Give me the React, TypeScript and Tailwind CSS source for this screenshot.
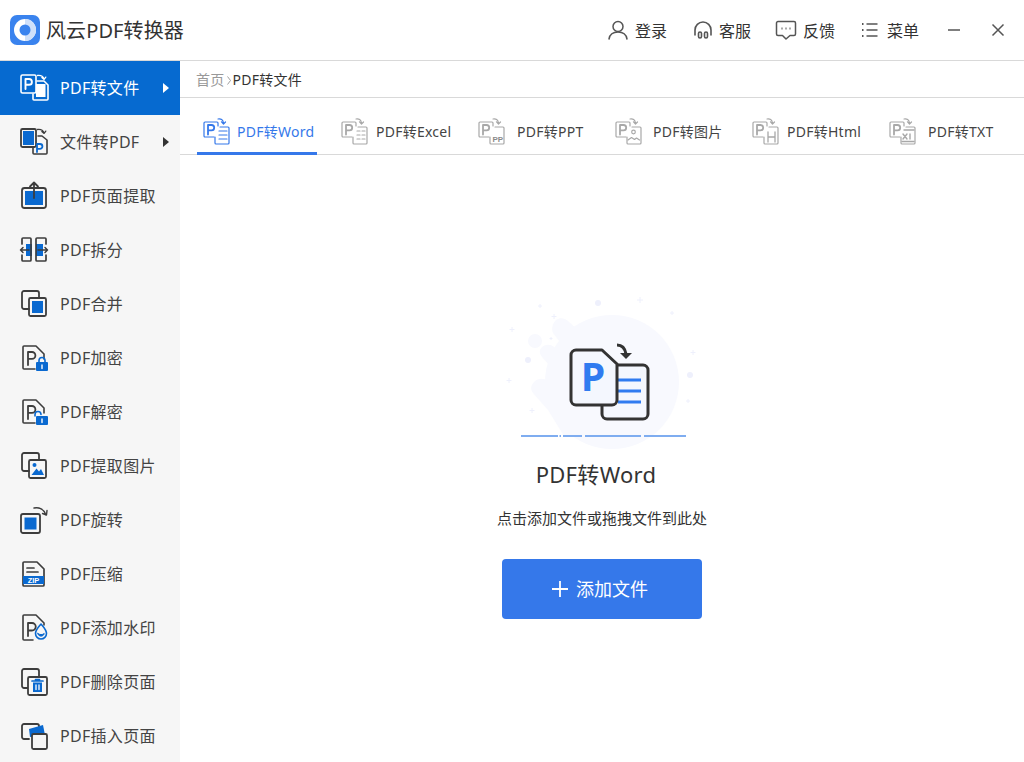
import type { ReactNode } from "react";

const DARK = "#3d3d3d";
const BLUE = "#0a69d0";

function Icon({ children, color = DARK }: { children: ReactNode; color?: string }) {
  return (
    <svg width="30" height="30" viewBox="0 0 30 30" fill="none" stroke={color} strokeWidth="1.6" strokeLinejoin="round" strokeLinecap="round">
      {children}
    </svg>
  );
}

function RotateArrow({ color }: { color: string }) {
  return <path d="M18.500 2.500c3-.4 5.500.6 6.500 3.400M22.800 4.600l2.300 1.800 1.700-2.300" stroke={color} strokeWidth="1.300" />;
}

const sidebarIcons: ReactNode[] = [
  <Icon color="#ffffff" key="0">
    <rect x="2" y="2" width="15" height="18" rx="1.5" />
    <path d="M6.500 16V6h3.500a2.800 2.800 0 0 1 0 5.800H6.500" strokeWidth="1.900" />
    <path d="M18 8h7l4 4v14a1 1 0 0 1-1 1H15a1 1 0 0 1-1-1v-5" />
    <rect x="17" y="11" width="9.500" height="13" fill="#ffffff" stroke="none" />
    <RotateArrow color="#ffffff" />
  </Icon>,
  <Icon key="1">
    <rect x="2" y="2" width="15" height="18" rx="1.5" strokeWidth="1.8" />
    <rect x="4" y="4" width="11" height="14" fill={BLUE} stroke="none" />
    <path d="M19 9h4l5 4v13a1 1 0 0 1-1 1H15a1 1 0 0 1-1-1v-6" strokeWidth="1.6" />
    <path d="M18 25v-8h3a2.300 2.300 0 0 1 0 4.800h-3" stroke={BLUE} strokeWidth="1.800" />
    <RotateArrow color={DARK} />
  </Icon>,
  <Icon key="2">
    <rect x="3" y="7" width="24" height="20" rx="2.500" strokeWidth="1.800" />
    <rect x="6" y="10" width="18" height="14" fill={BLUE} stroke="none" />
    <path d="M15 17V2M11 5.500 15 1.500l4 4" strokeWidth="1.800" />
  </Icon>,
  <Icon key="3">
    <rect x="7" y="9" width="6" height="12" fill={BLUE} stroke="none" />
    <rect x="17" y="9" width="7" height="12" fill={BLUE} stroke="none" />
    <path d="M3 9V4a1 1 0 0 1 1-1h7a1 1 0 0 1 1 1v21a1 1 0 0 1-1 1H4a1 1 0 0 1-1-1v-5M27 9V4a1 1 0 0 0-1-1h-8a1 1 0 0 0-1 1v21a1 1 0 0 0 1 1h8a1 1 0 0 0 1-1v-5" strokeWidth="1.700" />
    <path d="M1.500 15H10M4 12.500 1.500 15 4 17.500M19 15h9.500M26 12.500l2.500 2.500-2.500 2.500" strokeWidth="1.500" />
  </Icon>,
  <Icon key="4">
    <path d="M10 20H5a2 2 0 0 1-2-2V4a2 2 0 0 1 2-2h13a2 2 0 0 1 2 2v5" strokeWidth="1.800" />
    <rect x="10" y="9" width="17" height="18" rx="1.500" strokeWidth="1.800" />
    <rect x="13" y="12" width="11" height="12" fill={BLUE} stroke="none" />
  </Icon>,
  <Icon key="5">
    <path d="M16 26H5a1 1 0 0 1-1-1V4a1 1 0 0 1 1-1h12l8 8v5" />
    <path d="M9 22V9h4a3.300 3.300 0 0 1 0 6.800H9" strokeWidth="1.800" />
    <rect x="17" y="19" width="12" height="9" rx="1" fill={BLUE} stroke="none" />
    <path d="M20 19v-1.500a3 3 0 0 1 6 0V19" stroke={BLUE} />
    <path d="M23 22v3.500" stroke="#ffffff" strokeWidth="1.400" />
  </Icon>,
  <Icon key="6">
    <path d="M16 26H5a1 1 0 0 1-1-1V4a1 1 0 0 1 1-1h12l8 8v5" />
    <path d="M9 22V9h4a3.300 3.300 0 0 1 0 6.800H9" strokeWidth="1.800" />
    <rect x="17" y="19" width="12" height="9" rx="1" fill={BLUE} stroke="none" />
    <path d="M16 19v-1.500a3 3 0 0 1 6 0" stroke={BLUE} />
    <path d="M23 22v3.500" stroke="#ffffff" strokeWidth="1.400" />
  </Icon>,
  <Icon key="7">
    <path d="M10 20H5a2 2 0 0 1-2-2V4a2 2 0 0 1 2-2h13a2 2 0 0 1 2 2v5" strokeWidth="1.800" />
    <rect x="10" y="9" width="17" height="18" rx="1.500" strokeWidth="1.800" />
    <circle cx="15.500" cy="14" r="2" fill={BLUE} stroke="none" />
    <path d="M12.500 24l5-6.500 2.500 3 2-2.500 3 6z" fill={BLUE} stroke="none" />
  </Icon>,
  <Icon key="8">
    <rect x="2" y="9" width="19" height="19" rx="2" strokeWidth="1.800" />
    <rect x="5.500" y="12.500" width="12" height="12" fill={BLUE} stroke="none" />
    <path d="M15 3c5-1 10 1 12 7M28 5.500 27.500 10l-4-1.500" strokeWidth="1.400" />
  </Icon>,
  <Icon key="9">
    <path d="M5 27a1 1 0 0 1-1-1V4a1 1 0 0 1 1-1h13l7 7v16a1 1 0 0 1-1 1z" strokeWidth="1.700" />
    <path d="M8 9h7M8 13h11" strokeWidth="1.700" />
    <rect x="4" y="17" width="21" height="8" fill={BLUE} stroke="none" />
    <text x="14.500" y="24" textAnchor="middle" fontSize="7.500" fontWeight="700" fill="#ffffff" stroke="none" fontFamily="Liberation Sans, sans-serif">ZIP</text>
  </Icon>,
  <Icon key="10">
    <path d="M14 27H5a1 1 0 0 1-1-1V3a1 1 0 0 1 1-1h12l8 8v2" />
    <path d="M9 23V10h4a3.500 3.500 0 0 1 0 7.500H9" strokeWidth="1.800" />
    <path d="M22 11c-3 3.500-5.500 6-5.500 9.500a5.500 5.500 0 0 0 11 0c0-3.500-2.500-6-5.500-9.500z" fill="#f6f6f6" stroke={BLUE} strokeWidth="1.600" />
    <path d="M18.800 20.500c1.500 1.500 5 1.500 6.400 0-.5 3.500-6 3.500-6.400 0z" fill={BLUE} stroke={BLUE} strokeWidth="1" />
  </Icon>,
  <Icon key="11">
    <path d="M9 21H5a2 2 0 0 1-2-2V4a2 2 0 0 1 2-2h13a2 2 0 0 1 2 2v6" strokeWidth="1.800" />
    <rect x="9" y="10" width="19" height="18" rx="1.500" strokeWidth="1.800" fill="#f6f6f6" />
    <path d="M13 14h11M16.500 12.500h4" stroke={BLUE} strokeWidth="1.700" />
    <path d="M14 15.500h9V25h-9z" fill={BLUE} stroke="none" />
    <path d="M17 18v4.500M20 18v4.500" stroke="#ffffff" strokeWidth="1.300" />
  </Icon>,
  <Icon key="12">
    <path d="M10 18H5a2 2 0 0 1-2-2V5a2 2 0 0 1 2-2h13a2 2 0 0 1 2 2v1" strokeWidth="1.800" />
    <path d="M10 8l14-4 2 10-15 2z" fill={BLUE} stroke="none" />
    <rect x="13" y="13" width="15" height="15" rx="1.500" strokeWidth="1.800" fill="#f6f6f6" />
  </Icon>,
];

const menu = [
  "PDF转文件",
  "文件转PDF",
  "PDF页面提取",
  "PDF拆分",
  "PDF合并",
  "PDF加密",
  "PDF解密",
  "PDF提取图片",
  "PDF旋转",
  "PDF压缩",
  "PDF添加水印",
  "PDF删除页面",
  "PDF插入页面",
];

function TabIcon({ color, children }: { color: string; children: ReactNode }) {
  return (
    <svg width="27" height="27" viewBox="0 0 27 27" fill="none" stroke={color} strokeWidth="1.200" strokeLinejoin="round" strokeLinecap="round">
      <path d="M11 19H2a1 1 0 0 1-1-1V5a1 1 0 0 1 1-1h12a1 1 0 0 1 1 1v3" />
      <path d="M5 16.500V7h3.500a2.600 2.600 0 0 1 0 5.400H5" strokeWidth="1.800" />
      <path d="M12 19v6a1 1 0 0 0 1 1h12a1 1 0 0 0 1-1V10a1 1 0 0 0-1-1h-8" />
      <path d="M15 1c3-.5 5 .8 5.500 4M18.500 3.800 20.500 6l2-2" />
      {children}
    </svg>
  );
}

const tabs = [
  { label: "PDF转Word", gap: "ml-[7px]", extra: <path d="M16 13h8M16 17h8M16 21h8" /> },
  { label: "PDF转Excel", gap: "ml-[8px]", extra: <path d="M16 13h3M21 13h3M16 17h3M21 17h3M16 21h3M21 21h3" /> },
  { label: "PDF转PPT", gap: "ml-[12px]", extra: <text x="14.500" y="24" fontSize="8" fill="#8a8a8a" stroke="none" fontWeight="700" fontFamily="Liberation Sans, sans-serif">PP</text> },
  { label: "PDF转图片", gap: "ml-[11px]", extra: <><circle cx="18.500" cy="14" r="1.800" /><path d="M13 22l3.500-2.500 3 2 2-1.500 3 2" /></> },
  { label: "PDF转Html", gap: "ml-[8px]", extra: <path d="M16 14v10M23 14v10M16 19h7" strokeWidth="1.300" /> },
  { label: "PDF转TXT", gap: "ml-[12px]", extra: <path d="M15 12h10M14 16l4 5M18 16l-4 5M21 16v5M13 23.500h12" strokeWidth="1.400" /> },
];

function Illustration() {
  return (
    <svg width="220" height="165" viewBox="0 0 220 165" fill="none">
      <circle cx="122" cy="97" r="67" fill="#f8f9fe" />
      <path d="M66 35c4-3 9-2 12 1l26 24-14 16-13-11c-4-3-4-4-7-8l-7-9c-2-5 0-10 3-13zM52 62c5-4 12-2 15 3l12 10-6 8c-3 3-8 2-12-1l-9-10c-3-4-3-7 0-10zM44 97c4-4 10-4 14-1l18-2 22 56-24 1-16-26-15-17c-3-4-2-8 1-11z" fill="#f8f9fe" />
      <circle cx="45" cy="56" r="7" fill="#f8f9fe" />
      <circle cx="108" cy="18" r="3" fill="#eef0fc" />
      <circle cx="38" cy="75" r="3" fill="#eef0fc" />
      <circle cx="200" cy="90" r="3" fill="#eef0fc" />
      <g stroke="#eef0fc" strokeWidth="1">
        <path d="M150 12v6M147 15h6M50 19v4M48 21h4M64 29v5M61.500 31.500h5M22 42v5M19.500 44.500h5M61 52v3M59.500 53.500h3M182 26v4M180 28h4M203 65v5M200.500 67.500h5M19 93v5M16.500 95.500h5M198 114v4M196 116h4M42 123v5M39.500 125.500h5" />
      </g>
      <path d="M116 80h37a5 5 0 0 1 5 5v44a5 5 0 0 1-5 5h-36a5 5 0 0 1-5-5v-10" fill="#f4f7fe" stroke="#333333" strokeWidth="3" />
      <path d="M128 95h23M128 106h23M128 117h23" stroke="#2f7bf0" strokeWidth="3" />
      <path d="M86 65h26l15 14v36a5 5 0 0 1-5 5H86a5 5 0 0 1-5-5V70a5 5 0 0 1 5-5z" fill="#f4f7fe" stroke="#333333" strokeWidth="3" strokeLinejoin="round" />
      <text x="103" y="106" textAnchor="middle" fontSize="39" fontWeight="700" fill="#2f7bf0" fontFamily="Open Sans, sans-serif">P</text>
      <path d="M127 60c5 0 8 3 9 9" stroke="#333333" strokeWidth="3" />
      <path d="M130 68h12l-6 6z" fill="#333333" />
      <path d="M31 151h37M69.500 151h1.500M73 151h19M95 151h56M154 151h42" stroke="#7fadf0" strokeWidth="2" />
    </svg>
  );
}

export default function App() {
  return (
    <div className="flex h-[762px] w-[1024px] flex-col overflow-hidden bg-white font-['Noto_Sans','Noto_Sans_CJK_SC',sans-serif] text-[#333]">
      <header className="flex h-[61px] shrink-0 items-center border-b border-[#d9d9d9] pb-[1px]">
        <svg className="ml-[10px]" width="30" height="30" viewBox="0 0 30 30">
          <rect width="30" height="30" rx="7" fill="#3a83ee" />
          <circle cx="15" cy="15" r="11" fill="#ffffff" />
          <path d="M15 4a11 11 0 0 1 0 22" fill="#cfe0fa" />
          <circle cx="15" cy="15" r="5.500" fill="#3a83ee" />
        </svg>
        <span className="ml-[6px] mt-[3px] text-[20px] leading-none tracking-[0.1px]">风云PDF转换器</span>
        <div className="ml-auto flex items-center text-[16px] leading-none">
          <svg className="mt-[1px]" width="22" height="22" viewBox="0 0 22 22" fill="none" stroke="#555" strokeWidth="1.500" strokeLinecap="round">
            <circle cx="11" cy="7.500" r="5" />
            <path d="M2 20c.8-4.500 4-7 9-7s8.200 2.500 9 7" />
          </svg>
          <span className="ml-[6px] mt-[3px]">登录</span>
          <svg className="ml-[25px] mt-[1px]" width="22" height="22" viewBox="0 0 22 22" fill="none" stroke="#555" strokeWidth="1.600" strokeLinecap="round">
            <path d="M3 16v-5a8 8 0 0 1 16 0v5" />
            <rect x="6.500" y="13" width="3" height="6" rx="1.500" />
            <rect x="12.500" y="13" width="3" height="6" rx="1.500" />
          </svg>
          <span className="ml-[5px] mt-[3px]">客服</span>
          <svg className="ml-[24px]" width="22" height="22" viewBox="0 0 22 22" fill="none" stroke="#555" strokeWidth="1.500" strokeLinejoin="round">
            <path d="M3 2.500h16a1.500 1.500 0 0 1 1.500 1.500v11a1.500 1.500 0 0 1-1.500 1.500h-4L11 20l-3.500-3.500H3A1.500 1.500 0 0 1 1.500 15V4A1.500 1.500 0 0 1 3 2.500z" />
            <path d="M6.500 9.500h1M10.500 9.500h1M14.500 9.500h1" strokeWidth="2" />
          </svg>
          <span className="ml-[6px] mt-[3px]">反馈</span>
          <svg className="ml-[25px] mt-[1px]" width="20" height="20" viewBox="0 0 20 20" fill="none" stroke="#555" strokeWidth="1.500">
            <path d="M6.500 4h11M6.500 10h11M6.500 16h11" />
            <path d="M2 4h1.500M2 10h1.500M2 16h1.500" strokeWidth="2" />
          </svg>
          <span className="ml-[7px] mt-[2px]">菜单</span>
          <svg className="ml-[28px]" width="14" height="14" viewBox="0 0 14 14" stroke="#555" strokeWidth="1.500">
            <path d="M1 7h12" />
          </svg>
          <svg className="ml-[30px] mr-[19px]" width="14" height="14" viewBox="0 0 14 14" stroke="#555" strokeWidth="1.500">
            <path d="M1.500 1.500l11 11M12.500 1.500l-11 11" />
          </svg>
        </div>
      </header>

      <div className="flex min-h-0 flex-1">
        <aside className="w-[180px] shrink-0 bg-[#f6f6f6]">
          {menu.map((label, i) => (
            <div
              key={label}
              className={
                i === 0
                  ? "flex h-[54px] items-center bg-[#066ad0] pl-[19px] text-white"
                  : "flex h-[54px] items-center pl-[19px] text-[#444]"
              }
            >
              {sidebarIcons[i]}
              <span className="ml-[11px] text-[16px] leading-none tracking-[0.3px]">{label}</span>
              {i < 2 && (
                <span
                  className={
                    i === 0
                      ? "absolute left-[163px] h-0 w-0 border-y-[5px] border-l-[6px] border-y-transparent border-l-white"
                      : "absolute left-[163px] h-0 w-0 border-y-[5px] border-l-[6px] border-y-transparent border-l-[#333]"
                  }
                />
              )}
            </div>
          ))}
        </aside>

        <main className="flex min-w-0 flex-1 flex-col">
          <div className="flex h-[37px] shrink-0 items-center border-b border-[#d9d9d9] pl-[16px] pt-[2px] text-[14px] leading-none tracking-[0.25px]">
            <span className="text-[#999]">首页</span>
            <svg className="mx-[2px]" width="4" height="9" viewBox="0 0 4 9" fill="none" stroke="#888" strokeWidth="0.800">
              <path d="M.5.500l3 4-3 4" />
            </svg>
            <span>PDF转文件</span>
          </div>

          <div className="flex h-[57px] shrink-0 items-stretch border-b border-[#d9d9d9] pl-[17px]">
            {tabs.map((tab, i) => (
              <div key={tab.label} className={i === 0 ? "flex w-[138px] pt-[7px]" : "flex w-[137px] pt-[7px]"}>
                <div
                  className={
                    i === 0
                      ? "flex h-[50px] w-[120px] items-center border-b-[3px] border-[#3578ea] pl-[6px] pt-[6px] text-[#3578ea]"
                      : "flex h-[50px] items-center pb-[3px] pl-[6px] pt-[6px] text-[#444]"
                  }
                >
                  <TabIcon color={i === 0 ? "#3578ea" : "#a8a8a8"}>{tab.extra}</TabIcon>
                  <span className={`${tab.gap} whitespace-nowrap text-[14px] leading-none tracking-[0.25px]`}>{tab.label}</span>
                </div>
              </div>
            ))}
          </div>

          <div className="flex flex-1 flex-col items-center pt-[130px]">
            <div className="mr-[4px]">
              <Illustration />
            </div>
            <h1 className="mr-[12px] mt-[8px] text-[22px] font-normal leading-[32px] tracking-[0.3px]">PDF转Word</h1>
            <p className="mt-[17px] text-[15px] leading-[22px]">点击添加文件或拖拽文件到此处</p>
            <button className="mt-[30px] flex h-[60px] w-[200px] items-center justify-center rounded-[4px] bg-[#3578ea] pr-[4px] text-[18px] text-white">
              <svg width="16" height="16" viewBox="0 0 16 16" stroke="#ffffff" strokeWidth="1.800">
                <path d="M8 0v16M0 8h16" />
              </svg>
              <span className="ml-[8px]">添加文件</span>
            </button>
          </div>
        </main>
      </div>
    </div>
  );
}
